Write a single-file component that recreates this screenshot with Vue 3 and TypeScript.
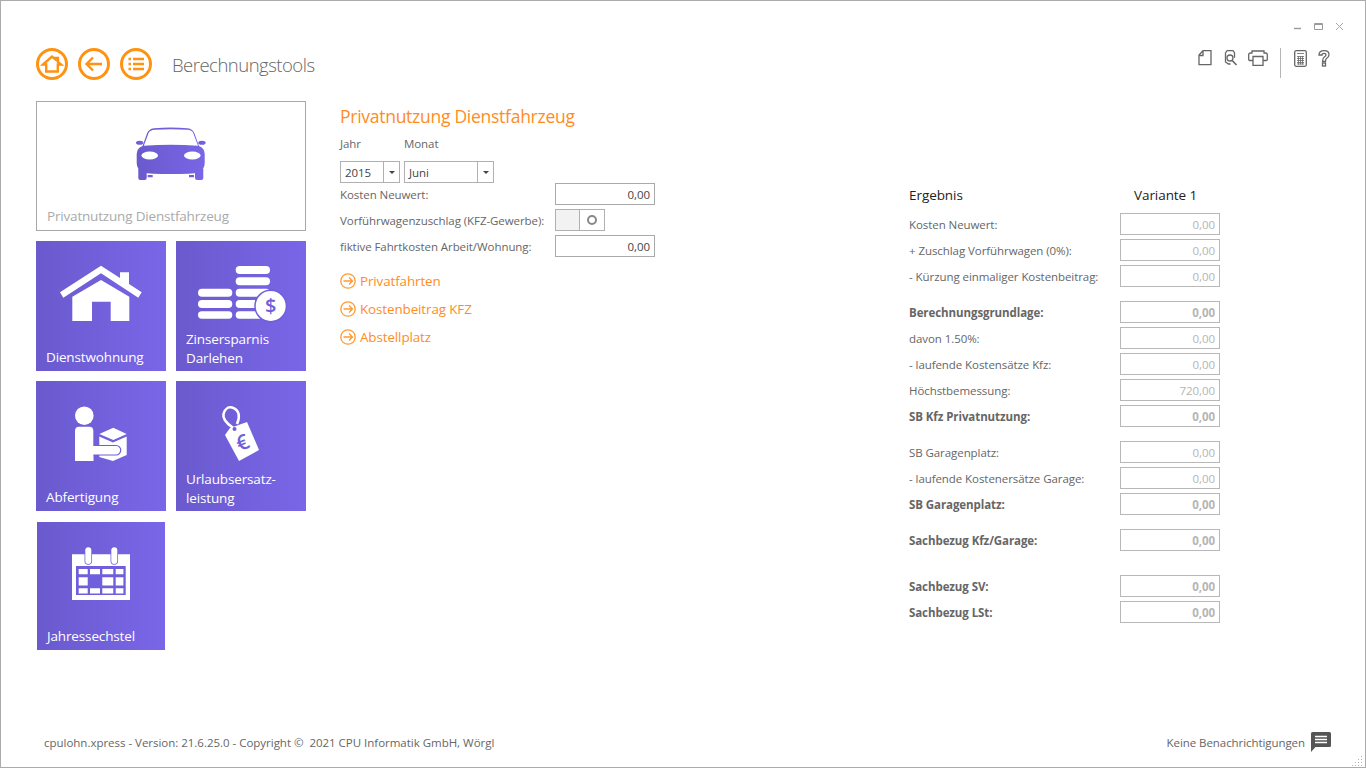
<script setup lang="ts">
interface Row { label: string; value: string; bold?: boolean }
const groups: { rows: Row[]; gap: string }[] = [
  { gap: 'g0', rows: [
    { label: 'Kosten Neuwert:', value: '0,00' },
    { label: '+ Zuschlag Vorführwagen (0%):', value: '0,00' },
    { label: '- Kürzung einmaliger Kostenbeitrag:', value: '0,00' },
  ] },
  { gap: 'g14', rows: [
    { label: 'Berechnungsgrundlage:', value: '0,00', bold: true },
    { label: 'davon 1.50%:', value: '0,00' },
    { label: '- laufende Kostensätze Kfz:', value: '0,00' },
    { label: 'Höchstbemessung:', value: '720,00' },
    { label: 'SB Kfz Privatnutzung:', value: '0,00', bold: true },
  ] },
  { gap: 'g14', rows: [
    { label: 'SB Garagenplatz:', value: '0,00' },
    { label: '- laufende Kostenersätze Garage:', value: '0,00' },
    { label: 'SB Garagenplatz:', value: '0,00', bold: true },
  ] },
  { gap: 'g14', rows: [{ label: 'Sachbezug Kfz/Garage:', value: '0,00', bold: true }] },
  { gap: 'g24', rows: [
    { label: 'Sachbezug SV:', value: '0,00', bold: true },
    { label: 'Sachbezug LSt:', value: '0,00', bold: true },
  ] },
]
const links = ['Privatfahrten', 'Kostenbeitrag KFZ', 'Abstellplatz']
</script>

<template>
  <div class="window">
    <div class="titlebar">
      <svg class="winbtn" width="60" height="12" viewBox="0 0 60 12">
        <path d="M10 10.500h7" stroke="#9a9a9a" stroke-width="1.400" fill="none" />
        <path d="M30.500 5.500h8v6h-8z M30.500 6.500h8" stroke="#9a9a9a" fill="none" />
        <path d="M52 5l7 7M59 5l-7 7" stroke="#aaa" fill="none" />
      </svg>
    </div>
    <header class="header">
      <div class="nav">
        <svg class="circle" width="32" height="32" viewBox="0 0 32 32">
          <circle cx="16" cy="16" r="14.500" />
          <path class="thin" d="M7 16.500L16 8.500l3.500 3V10h2.500v4l3 2.500h-3.200v7H10.200v-7z" />
        </svg>
        <svg class="circle" width="32" height="32" viewBox="0 0 32 32">
          <circle cx="16" cy="16" r="14.500" />
          <path class="thin" d="M9 16h15M15 9.500L8.500 16l6.500 6.500" />
        </svg>
        <svg class="circle" width="32" height="32" viewBox="0 0 32 32">
          <circle cx="16" cy="16" r="14.500" />
          <path class="thin" d="M8.500 11h2.500M8.500 16h2.500M8.500 21h2.500M13 11h11M13 16h11M13 21h11" />
        </svg>
        <h1 class="apptitle">Berechnungstools</h1>
      </div>
      <div class="tools">
        <svg width="14" height="16" viewBox="0 0 14 16" class="tool">
          <path d="M5 .7h8v14H1V5zM1 5.500h4V1" />
        </svg>
        <svg width="14" height="16" viewBox="0 0 14 16" class="tool t2">
          <path d="M3 .7h6l1.500 2v5M1.500 3v9l3 2h2M1.500 3L3 .7" />
          <circle cx="6" cy="8" r="3" />
          <path d="M8.200 10.500L12.500 15" stroke-width="1.600" />
        </svg>
        <svg width="20" height="16" viewBox="0 0 20 16" class="tool t3">
          <path d="M5 10.500H1.500A1 1 0 0 1 .7 9.500V4.500Q.7 3 2.500 3H4V1h12v2h1.500q1.800 0 1.800 1.500v5q0 1-1 1H15M5 6.500h10v9H5z" />
        </svg>
        <span class="sep"></span>
        <svg width="13" height="17" viewBox="0 0 13 17" class="tool t4">
          <rect x=".7" y=".7" width="11.600" height="15.600" rx="1.500" />
          <path d="M3 3.500h7M3 6.500h7M3 8.500h7M3 10.500h7M3 12.500h7M3 14h7M4.500 6.500v8M6.500 6.500v8M8.500 6.500v8" stroke-width=".8" />
        </svg>
        <svg width="12" height="17" viewBox="0 0 12 17" class="tool t5">
          <path d="M1 5Q1 .7 6 .7T11 4.500Q11 7 8.500 8.500 7.500 9.200 7.500 11.500H4.500Q4.500 8 6.500 6.800 8 6 8 4.500 8 3.300 6 3.300 4 3.300 4 5z" />
          <rect x="4.500" y="13" width="3" height="3" />
        </svg>
      </div>
    </header>

    <main class="main">
      <aside class="side">
        <div class="hero">
          <svg class="car" width="70" height="53" viewBox="0 0 70 53">
            <defs>
              <linearGradient id="carg" x1="0" x2="1" y1="0" y2="0">
                <stop offset="0" stop-color="#6a5acd" /><stop offset="1" stop-color="#7866e6" />
              </linearGradient>
            </defs>
            <ellipse cx="3.700" cy="15.800" rx="3.700" ry="2" fill="url(#carg)" />
            <ellipse cx="66" cy="15.800" rx="3.700" ry="2" fill="url(#carg)" />
            <path d="M2.300 42h8.400v9q0 2-2 2H4.300q-2 0-2-2zM59 42h8.300v9q0 2-2 2H61q-2 0-2-2z" fill="url(#carg)" />
            <path d="M11.700 48h5v2.300h-5zM53 48h5v2.300h-5z" fill="#6f5fda" />
            <path d="M.7 27Q1 21 6.500 19L11 6.500Q12.500 2 18 1.300 35-.5 51.500 1.300 57 2 58.500 6.500L63 19Q68.500 21 68.700 27V36Q68.700 43 62 45.500 57 47 35 47T7.500 45.500Q.7 43 .7 36z" fill="url(#carg)" />
            <path d="M7.800 18.700L12.800 5.500Q13.800 3.300 19 2.800 35 1.500 51 2.800 56 3.300 57 5.500L62 18.700Q35 16.800 7.800 18.700z" fill="#fff" />
            <ellipse cx="13.700" cy="28.500" rx="8.300" ry="4" fill="#fff" />
            <ellipse cx="56.300" cy="28.500" rx="8.300" ry="4" fill="#fff" />
          </svg>
          <span class="herolabel">Privatnutzung Dienstfahrzeug</span>
        </div>

        <div class="tiles">
          <div class="tile">
            <svg class="ti" width="130" height="130" viewBox="0 0 130 130">
              <path d="M24 51.300L65 24.700 84 37V31.300h9V43L105.700 51.300 102.300 56.700 65 32.300 27.300 56.700z" />
              <path d="M36.300 55.700L65 39 93.300 55.700V80H74.700V60.700H56V80H36.300z" />
            </svg>
            <span class="tlabel">Dienstwohnung</span>
          </div>
          <div class="tile">
            <svg class="ti" width="130" height="130" viewBox="0 0 130 130">
              <rect x="59.700" y="25" width="34.300" height="8" rx="4" />
              <rect x="59.700" y="36.300" width="34.300" height="8" rx="4" />
              <rect x="59.700" y="47.700" width="34.300" height="8" rx="4" />
              <rect x="59.700" y="59" width="34.300" height="8" rx="4" />
              <rect x="59.700" y="70.300" width="34.300" height="7.500" rx="3.700" />
              <rect x="22" y="47.700" width="34.300" height="8" rx="4" />
              <rect x="22" y="59" width="34.300" height="8" rx="4" />
              <rect x="22" y="70.300" width="34.300" height="7.500" rx="3.700" />
              <circle cx="94.700" cy="65" r="15" stroke="#6f5fdc" stroke-width="3" paint-order="stroke" />
              <text x="94.700" y="72" text-anchor="middle" class="glyph" font-size="20">$</text>
            </svg>
            <span class="tlabel two">Zinsersparnis<br />Darlehen</span>
          </div>
          <div class="tile">
            <svg class="ti" width="130" height="130" viewBox="0 0 130 130">
              <circle cx="48.300" cy="34.700" r="9.300" />
              <path d="M39 50Q39 45.700 43 45.700H53.500Q57.300 45.700 57.300 50V64H57.300V80H39z" />
              <path d="M77.300 46.700L90.700 53 77.300 59 63.300 53z" />
              <path d="M63.300 55.500L77 61.500 90.700 55.500V74L77 80 63.300 76z" />
              <path d="M55 64.500H80A4.700 4.700 0 0 1 80 74H55z" stroke="#6f5fdc" stroke-width="1.200" />
              <path d="M39 80V64H57.300V80z" />
            </svg>
            <span class="tlabel">Abfertigung</span>
          </div>
          <div class="tile">
            <svg class="ti" width="130" height="130" viewBox="0 0 130 130">
              <path d="M54 47L71 41 83 69 63 80 49 54z" />
              <path d="M57.300 47C50 42 46.500 37 47.500 33 49 27 53 25.800 56 26.500 62 28 65 34 61 43" fill="none" stroke="#fff" stroke-width="2.600" />
              <circle cx="58.500" cy="48" r="2" fill="#6f5fdc" />
              <text x="66.500" y="69" text-anchor="middle" class="glyph" font-size="21" transform="rotate(-24 66.500 62)">€</text>
            </svg>
            <span class="tlabel two">Urlaubsersatz-<br />leistung</span>
          </div>
          <div class="tile small">
            <svg class="ti" width="128" height="128" viewBox="0 0 128 128">
              <path d="M35 32.300H93V78H35z" />
              <rect x="39" y="44" width="49.700" height="29" fill="#6f5fdc" />
              <path d="M41.700 47h9v5.300h-9zM53 47h10v5.300H53zM65.300 47h11v5.300h-11zM78.700 47h7.700v5.300h-7.700zM41.700 55.300h9v8.300h-9zM65.300 55.300h11v8.300h-11zM78.700 55.300h7.700v8.300h-7.700zM41.700 66.300h9v5.300h-9zM53 66.300h10v5.300H53zM65.300 66.300h11v5.300h-11zM78.700 66.300h7.700v5.300h-7.700z" />
              <rect x="48.300" y="25.300" width="6" height="16.700" rx="3" stroke="#6f5fdc" stroke-width="1.500" paint-order="stroke" />
              <rect x="74.300" y="25.300" width="6" height="16.700" rx="3" stroke="#6f5fdc" stroke-width="1.500" paint-order="stroke" />
            </svg>
            <span class="tlabel">Jahressechstel</span>
          </div>
        </div>
      </aside>

      <section class="form">
        <h2 class="ftitle">Privatnutzung Dienstfahrzeug</h2>
        <div class="period-labels"><span class="pl1">Jahr</span><span>Monat</span></div>
        <div class="period">
          <div class="combo c1"><span class="cv">2015</span><span class="ca"><i></i></span></div>
          <div class="combo c2"><span class="cv">Juni</span><span class="ca"><i></i></span></div>
        </div>
        <div class="frow">
          <label class="flabel">Kosten Neuwert:</label>
          <input class="finput" value="0,00" />
        </div>
        <div class="frow">
          <label class="flabel">Vorführwagenzuschlag (KFZ-Gewerbe):</label>
          <div class="toggle"><span class="toff"></span><span class="ton"><i></i></span></div>
        </div>
        <div class="frow">
          <label class="flabel">fiktive Fahrtkosten Arbeit/Wohnung:</label>
          <input class="finput" value="0,00" />
        </div>
        <div class="links">
          <a v-for="l in links" :key="l" class="link">
            <svg width="16" height="16" viewBox="0 0 16 16">
              <circle cx="8" cy="8" r="7.200" />
              <path d="M3.500 8h9M9 4.500L12.500 8 9 11.500" />
            </svg>
            {{ l }}
          </a>
        </div>
      </section>

      <section class="result">
        <div class="rhead"><span>Ergebnis</span><span class="rvar">Variante 1</span></div>
        <div v-for="(g, i) in groups" :key="i" class="rgroup" :class="g.gap">
          <div v-for="r in g.rows" :key="r.label + r.value" class="rrow" :class="{ bold: r.bold }">
            <span class="rlabel">{{ r.label }}</span>
            <input class="rinput" :value="r.value" readonly />
          </div>
        </div>
      </section>
    </main>

    <footer class="footer">
      <span class="copy">cpulohn.xpress - Version: 21.6.25.0 - Copyright ©&nbsp; 2021 CPU Informatik GmbH, Wörgl</span>
      <div class="notif">
        <span>Keine Benachrichtigungen</span>
        <svg width="20" height="20" viewBox="0 0 20 20">
          <path d="M1.500 0h17A1.500 1.500 0 0 1 20 1.500v12a1.500 1.500 0 0 1-1.500 1.500H4.500L0 20V1.500A1.500 1.500 0 0 1 1.500 0z" fill="#555" />
          <path d="M4 4.500h12M4 7.500h12M4 10.500h12" stroke="#fff" stroke-width="1.300" />
        </svg>
      </div>
      <svg class="grip" width="12" height="12" viewBox="0 0 12 12">
        <path d="M9 1h1v1H9zM6 4h1v1H6zM9 4h1v1H9zM3 7h1v1H3zM6 7h1v1H6zM9 7h1v1H9zM0 10h1v1H0zM3 10h1v1H3zM6 10h1v1H6zM9 10h1v1H9z" fill="#b5b5b5" />
      </svg>
    </footer>
  </div>
</template>

<style>
html, body { margin: 0; background: #fff; }
</style>

<style scoped>
.window {
  position: relative;
  box-sizing: border-box;
  width: 1366px;
  height: 768px;
  border: 1px solid #ababab;
  display: flex;
  flex-direction: column;
  background: #fff;
  font-family: "Open Sans", "Noto Sans", sans-serif;
  font-size: 11.500px;
  letter-spacing: -0.07px;
  color: #666;
  overflow: hidden;
}
.titlebar { height: 47px; display: flex; justify-content: flex-end; align-items: flex-end; flex: none; }
.winbtn { margin: 0 21px 18px 0; }
.header { height: 53px; flex: none; display: flex; justify-content: space-between; padding: 0 35px; box-sizing: border-box; }
.nav { display: flex; align-items: flex-start; gap: 10px; }
.circle { fill: none; stroke: #ff9210; stroke-width: 3; }
.circle .thin { stroke-width: 2.400; }
.apptitle { margin: 0 0 0 10px; font-weight: 300; font-size: 18.500px; letter-spacing: -0.5px; color: #666; line-height: 34px; }
.tools { display: flex; align-items: flex-start; }
.tool { fill: none; stroke: #666; stroke-width: 1.300; margin-top: 2px; }
.t2 { margin-left: 12px; }
.t3 { margin-left: 10px; }
.sep { width: 1px; height: 30px; background: #b5b5b5; margin: 0 13px 0 12px; }
.t5 { margin-left: 11px; }
.main { flex: 1; display: grid; grid-template-columns: 270px 603px 311px; padding-left: 35px; min-height: 0; }
.side { width: 270px; }
.hero {
  box-sizing: border-box;
  height: 130px;
  border: 1px solid #a8a8a8;
  display: flex;
  flex-direction: column;
  position: relative;
}
.car { margin: 25px 0 0 99px; }
.herolabel { position: absolute; left: 10px; bottom: 4px; font-size: 13.500px; letter-spacing: -0.18px; color: #aaa; line-height: 20px; }
.tiles { display: grid; grid-template-columns: 130px 130px; grid-auto-rows: 130px; gap: 10px; margin-top: 10px; }
.tile {
  position: relative;
  background: linear-gradient(90deg, #6a5acd, #7966e8);
  color: #fff;
}
.tile.small { width: 128px; height: 128px; margin: 1px; }
.ti { display: block; fill: #fff; }
.tlabel { position: absolute; left: 10px; bottom: 4px; font-size: 13.500px; letter-spacing: -0.14px; line-height: 19px; color: #fff; }
.tlabel.two { bottom: 3px; }
.glyph { font-family: "Open Sans", sans-serif; font-weight: 600; fill: #6f5fdc; }
.form { padding-left: 34px; }
.ftitle { margin: 0; font-weight: 400; font-size: 17.500px; letter-spacing: -0.27px; line-height: 30px; color: #ff8c1e; }
.period-labels { display: flex; margin-top: 5px; line-height: 16px; }
.pl1 { width: 64px; }
.period { display: flex; gap: 4px; margin-top: 9px; }
.combo { box-sizing: border-box; height: 22px; border: 1px solid #b0b0b0; display: flex; align-items: center; color: #444; }
.c1 { width: 60px; }
.c2 { width: 90px; }
.cv { flex: 1; padding-left: 4px; }
.ca { width: 15px; height: 100%; border-left: 1px solid #b0b0b0; display: flex; align-items: center; justify-content: center; }
.ca i { width: 0; height: 0; border: 3px solid transparent; border-top-color: #444; border-bottom: 0; }
.frow { height: 22px; margin-bottom: 4px; width: 315px; display: flex; justify-content: space-between; align-items: center; }
.flabel { white-space: nowrap; }
.finput {
  box-sizing: border-box;
  width: 100px;
  height: 22px;
  border: 1px solid #aaa;
  background: #fff;
  font: inherit;
  letter-spacing: inherit;
  color: #444;
  text-align: right;
  padding: 0 4px;
  outline: none;
}
.toggle { box-sizing: border-box; width: 50px; height: 22px; border: 1px solid #b0b0b0; display: flex; margin-right: 50px; }
.toff { width: 23px; background: #f2f2f2; border-right: 1px solid #b0b0b0; }
.ton { flex: 1; display: flex; align-items: center; justify-content: center; }
.ton i { box-sizing: border-box; width: 10px; height: 10px; border: 2px solid #888; border-radius: 50%; }
.links { margin-top: 10px; display: flex; flex-direction: column; }
.link { display: flex; align-items: center; gap: 4px; height: 28px; font-size: 13.400px; letter-spacing: -0.1px; color: #ff8c1e; }
.link svg { fill: none; stroke: #ff9a30; stroke-width: 1.300; }
.result { padding-top: 84px; }
.rhead { display: grid; grid-template-columns: 211px 100px; line-height: 20px; color: #222; font-size: 13.500px; margin-bottom: 8px; }
.rvar { padding-left: 14px; }
.rgroup { display: flex; flex-direction: column; gap: 4px; }
.g14 { margin-top: 14px; }
.g24 { margin-top: 24px; }
.rrow { display: grid; grid-template-columns: 211px 100px; height: 22px; align-items: center; }
.rlabel { white-space: nowrap; }
.rinput {
  box-sizing: border-box;
  width: 100px;
  height: 22px;
  border: 1px solid #b8b8b8;
  background: #fff;
  font: inherit;
  letter-spacing: inherit;
  color: #b5b5b5;
  text-align: right;
  padding: 0 4px;
  outline: none;
}
.bold .rlabel, .bold .rinput { font-weight: 700; letter-spacing: -0.08px; }
.footer { height: 50px; flex: none; display: flex; justify-content: space-between; align-items: center; padding: 0 34px 0 43px; position: relative; }
.copy { letter-spacing: -0.02px; }
.notif { display: flex; align-items: center; gap: 6px; }
.grip { position: absolute; right: 1px; bottom: 0; }
</style>
